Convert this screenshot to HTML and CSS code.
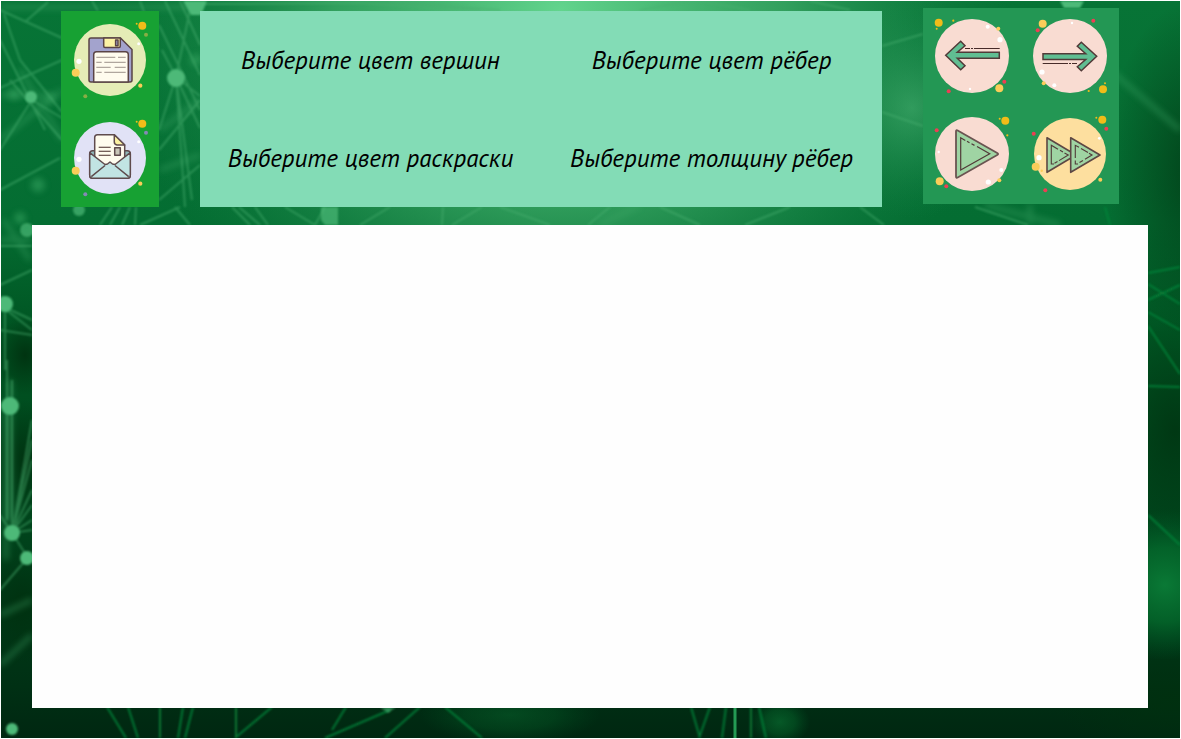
FILE: index.html
```html
<!DOCTYPE html>
<html lang="ru">
<head>
<meta charset="utf-8">
<meta name="viewport" content="width=device-width, initial-scale=1">
<title>Редактор графов</title>
<link rel="stylesheet" href="styles.css">
</head>
<body>
<div class="app">
  <svg class="backdrop" viewBox="1 1 1179 737" preserveAspectRatio="none" aria-hidden="true">
    <defs>
      <linearGradient id="base" x1="0" y1="0" x2="0" y2="1">
        <stop offset="0" stop-color="#077436"/><stop offset=".3" stop-color="#046d32"/><stop offset=".45" stop-color="#005422"/><stop offset=".7" stop-color="#00451c"/><stop offset=".93" stop-color="#003014"/><stop offset="1" stop-color="#002711"/>
      </linearGradient>
      <radialGradient id="light"><stop offset="0" stop-color="#62d48d"/><stop offset=".5" stop-color="#40ae6a" stop-opacity=".75"/><stop offset="1" stop-color="#168548" stop-opacity="0"/></radialGradient>
      <radialGradient id="soft"><stop offset="0" stop-color="#4cb576" stop-opacity=".8"/><stop offset="1" stop-color="#16874a" stop-opacity="0"/></radialGradient>
      <radialGradient id="glow"><stop offset="0" stop-color="#0b8039" stop-opacity=".9"/><stop offset=".5" stop-color="#05702f" stop-opacity=".7"/><stop offset="1" stop-color="#00602a" stop-opacity="0"/></radialGradient>
      <radialGradient id="dark"><stop offset="0" stop-color="#00300f" stop-opacity=".9"/><stop offset="1" stop-color="#00300f" stop-opacity="0"/></radialGradient>
      <filter id="blur1"><feGaussianBlur stdDeviation="1"/></filter>
      <filter id="blur3"><feGaussianBlur stdDeviation="3"/></filter>
    </defs>
    <rect x="1" y="1" width="1179" height="737" fill="url(#base)"/>
    <ellipse cx="560" cy="10" rx="450" ry="380" fill="url(#light)"/>
    <ellipse cx="912" cy="108" rx="100" ry="110" fill="url(#soft)" opacity=".7"/>
    <ellipse cx="1195" cy="170" rx="90" ry="170" fill="url(#dark)" opacity=".75"/>
    <ellipse cx="1175" cy="430" rx="70" ry="110" fill="url(#dark)" opacity=".8"/>
    <ellipse cx="1175" cy="700" rx="120" ry="60" fill="url(#dark)"/>
    <ellipse cx="1165" cy="585" rx="80" ry="75" fill="url(#glow)"/>
    <ellipse cx="25" cy="355" rx="30" ry="40" fill="url(#dark)"/>
    <ellipse cx="25" cy="460" rx="35" ry="60" fill="url(#dark)"/>
    <ellipse cx="22" cy="605" rx="40" ry="60" fill="url(#dark)"/>
    <ellipse cx="780" cy="722" rx="30" ry="24" fill="url(#glow)" opacity=".6"/>
    <ellipse cx="510" cy="715" rx="90" ry="30" fill="url(#glow)" opacity=".4"/>
    <g fill="none" stroke="#3fa869" stroke-width="5" opacity=".4" filter="url(#blur3)">
      <path d="M0 7H200M0 95H60M0 140 62 90M20 70 62 140M160 130 200 100M0 240H32M10 380V520M6 400V560M4 220 30 260M0 615 32 600M0 665 32 635M160 170 200 155M1110 70 1180 130M640 205 600 225M985 205 1060 225M1030 205V225"/>
    </g>
    <g fill="none" stroke="#48af70" stroke-width="2" opacity=".5" filter="url(#blur1)">
      <path d="M0 10 62 38M0 88 62 60M0 190 60 158M20 60 62 112M10 80 62 140M25 22 48 2M0 150 35 95M92 1 98 11M140 1 158 50M32 100 62 118M0 40 45 130M4 14 20 60"/>
      <path d="M159 25 200 110M165 1 200 75M180 1 200 45M176 77 159 130M176 77 185 207M176 77 192 200M176 77 200 128M176 77 200 96M176 77 162 50M176 77 190 10M159 150 200 100M159 200 200 165"/>
      <path d="M100 225 112 207M110 225 120 207M122 225 130 207M135 225 136 207M140 225 180 207M190 225 175 207M232 207 250 225M239 207 260 225M255 207 268 225M285 207 315 225M315 225 325 207M360 225 390 207M442 225 443 207M452 225 482 207M500 207 550 225M588 225 610 207M660 207 700 225M745 225 790 207M860 207 884 225M882 46 923 34M882 112 923 126M975 207 1028 225"/>
      <path d="M200 4 360 3 480 10M390 1 500 10M640 10 690 1M700 1 750 10M810 1 850 10"/>
      <path d="M0 246H32M0 285 32 270M0 305 32 320M0 305 32 330M0 330 32 335M5 310V370M12 533 32 420M12 533 32 440M12 533 32 460M12 533 32 490M12 533 32 505M12 533 32 520M12 533 32 530M12 533 28 558M12 533 0 515M12 533V380M7 360V520M30 555 0 590"/>
    </g>
    <g fill="none" stroke="#07833a" stroke-width="2" opacity=".85" filter="url(#blur1)">
      <path d="M107 707 126 738M128 707 138 738M160 707V738M183 707 178 738M193 707 185 738M236 707V738M272 707 235 738M390 710 325 738M420 707 385 738M346 707 332 730M445 707 482 738M691 707 700 738M710 707 699 738M726 707 722 738M751 707V738M759 707 766 738"/>
      <path d="M1148 273 1180 267M1148 284 1180 304M1148 300 1180 285M1148 312 1180 330M1148 326 1180 374M1148 386 1180 387M1148 515 1180 545M1105 207 1110 225"/>
    </g>
    <path d="M735 707V738" stroke="#249b54" stroke-width="3"/>
    <g fill="#4db978" filter="url(#blur1)">
      <circle cx="176" cy="78" r="9"/><path d="M183 1h24l-6 14h-10zM1060 1h24l-4 7h-16z"/><circle cx="31" cy="97" r="6"/>
      <circle cx="79" cy="210" r="6" opacity=".7"/><path d="M321 207h17v18h-13l-4-5z" opacity=".7"/><circle cx="27" cy="230" r="7" opacity=".7"/>
      <circle cx="5" cy="304" r="8"/><circle cx="10" cy="406" r="9"/><circle cx="12" cy="533" r="8"/><circle cx="27" cy="558" r="7"/><circle cx="12" cy="729" r="6"/><path d="M380 707h16l-8 6z" opacity=".6"/>
    </g>
    <g fill="#3cab67" opacity=".5" filter="url(#blur3)"><circle cx="38" cy="185" r="7"/><circle cx="14" cy="94" r="6"/><circle cx="50" cy="99" r="5"/><circle cx="20" cy="218" r="6"/><circle cx="196" cy="60" r="6"/></g>
  </svg>

  <header class="toolbar">
    <div class="file-panel">
      <button class="tool" type="button" aria-label="Сохранить">
        <svg viewBox="0 0 98 98" aria-hidden="true">
          <circle cx="49" cy="49" r="36" fill="#e5ecb6"/>
          <g fill="#f1bc19"><circle cx="81.3" cy="14.7" r="4"/><circle cx="75.7" cy="12.7" r="1"/></g>
          <g fill="#88ae45"><circle cx="85" cy="23.7" r="2"/><circle cx="24.3" cy="85.3" r="2"/></g>
          <g fill="#fff"><circle cx="77.7" cy="32.7" r="1.5"/><circle cx="18" cy="50.3" r="2.6"/></g>
          <g fill="#fbcd59"><circle cx="14.7" cy="61.7" r="4"/><circle cx="79.3" cy="74.7" r="2.1"/></g>
          <g stroke="#5a4446" stroke-width="1.5" stroke-linejoin="round">
            <path d="M30 27H59.5L71 38.5V69Q71 71 69 71H30Q28 71 28 69V29Q28 27 30 27Z" fill="#a3a3cd"/>
            <path d="M42.7 27H59.3V35Q59.3 36.5 58 36.5H44Q42.7 36.5 42.7 35Z" fill="#fdf3a4"/>
            <path d="M32.7 71V43.5Q32.7 40.7 35.5 40.7H64.5Q67.3 40.7 67.3 43.5V71Z" fill="#fffcee"/>
            <rect x="54.6" y="29" width="2.4" height="5.7" fill="#a3a3cd"/>
          </g>
          <path d="M35.3 46.3H54.3M57 46.3H64.7M35.3 51.3H40.7M43.3 51.3H64.7M35.3 56.3H49.7M53.7 56.3H64.7M35.3 61.3H40.7M43.3 61.3H64.7" stroke="#9d918a" stroke-width="1"/>
        </svg>
      </button>
      <button class="tool" type="button" aria-label="Открыть">
        <svg viewBox="0 0 98 98" aria-hidden="true">
          <circle cx="49" cy="49" r="36" fill="#e1e2f6"/>
          <g fill="#f1bc19"><circle cx="81.3" cy="14.7" r="4"/><circle cx="75.7" cy="12.7" r="1"/></g>
          <g fill="#8589b5"><circle cx="85" cy="23.7" r="2"/><circle cx="24.3" cy="85.3" r="2"/></g>
          <g fill="#fff"><circle cx="77.7" cy="32.7" r="1.5"/><circle cx="18" cy="50.3" r="2.6"/></g>
          <g fill="#fbcd59"><circle cx="14.7" cy="61.7" r="4"/><circle cx="79.3" cy="74.7" r="2.1"/></g>
          <g stroke="#5f4b4d" stroke-width="1.5" stroke-linejoin="round">
            <rect x="28.7" y="41.7" width="40.6" height="27.6" rx="3" fill="#8fb7ba"/>
            <path d="M33.7 60V28.5Q33.7 25.7 36.5 25.7H53.3L63.7 36V60Z" fill="#fffcee"/>
            <path d="M53.3 25.7V33Q53.3 35.5 56 36H63.7Z" fill="#fdf3a4"/>
            <path d="M28.7 43.7 44 55.5 46.5 55 49 53 51.5 55 54 55.5 69.3 43.7V66.5Q69.3 69.3 66.5 69.3H31.5Q28.7 69.3 28.7 66.5Z" fill="#c1e4e3"/>
            <path d="M30.3 67.7 44 56.5M67.7 67.7 54 56.5" fill="none"/>
            <rect x="53.7" y="38.7" width="5.6" height="7.6" fill="#c9c6b9"/>
          </g>
          <path d="M37.7 38.3H49.7M37.7 42.3H49.7M37.7 46.3H49.7" stroke="#472b29" stroke-width="1.1"/>
        </svg>
      </button>
    </div>

    <nav class="settings" aria-label="Настройки графа">
      <button class="setting" type="button">Выберите цвет вершин</button>
      <button class="setting" type="button">Выберите цвет рёбер</button>
      <button class="setting" type="button">Выберите цвет раскраски</button>
      <button class="setting" type="button">Выберите толщину рёбер</button>
    </nav>

    <div class="playback">
      <button class="tool" type="button" aria-label="Назад">
        <svg viewBox="0 0 98 98" aria-hidden="true">
          <circle cx="49" cy="48" r="37" fill="#f9dcd2"/>
          <g fill="#f1bc19"><circle cx="15.7" cy="14.7" r="4"/><circle cx="13.7" cy="20.7" r="1"/><circle cx="30.3" cy="12.7" r="1.1"/></g>
          <g fill="#fbcd59"><circle cx="75.3" cy="20.7" r="2"/><circle cx="76.3" cy="80.3" r="4"/></g>
          <g fill="#fff"><circle cx="64.7" cy="18.7" r="2"/><circle cx="77" cy="31.7" r="2.6"/><circle cx="47" cy="81" r="1.2"/></g>
          <g fill="#ee3e54"><circle cx="81.3" cy="73.7" r="2"/><circle cx="25.7" cy="83.3" r="2"/></g>
          <path d="M22.7 47.3 37.7 33.3 42 37.7 34.3 44.3H76.3V50.3H34.3L42 57.7 37.7 61.7Z" fill="#60be92" stroke="#513a38" stroke-width="1.5"/>
          <path d="M42 40.5H47M48 40.5H50M51 40.5H76.7" stroke="#472b29" stroke-width="1"/>
        </svg>
      </button>
      <button class="tool" type="button" aria-label="Вперёд">
        <svg viewBox="0 0 98 98" aria-hidden="true">
          <circle cx="49" cy="48" r="37" fill="#f9dcd2"/>
          <g fill="#f1bc19"><circle cx="82" cy="81.3" r="4"/><circle cx="84" cy="75.3" r="1"/><circle cx="67.7" cy="83" r="1.1"/></g>
          <g fill="#fbcd59"><circle cx="21.7" cy="15.7" r="4"/><circle cx="22.7" cy="75.3" r="2"/></g>
          <g fill="#fff"><circle cx="51" cy="15" r="1.2"/><circle cx="21" cy="64" r="2.6"/><circle cx="33.3" cy="77.3" r="2"/></g>
          <g fill="#ee3e54"><circle cx="16.7" cy="22.3" r="2"/><circle cx="72.3" cy="12.7" r="2"/></g>
          <path d="M22 45.7H64.7L56.3 38.3 60.3 34.3 75.7 48.3 60.3 62.7 56.3 58.7 64.7 51.5H22Z" fill="#60be92" stroke="#513a38" stroke-width="1.5"/>
          <path d="M21.7 55.5H47M48 55.5H50M51 55.5H56" stroke="#472b29" stroke-width="1"/>
        </svg>
      </button>
      <button class="tool" type="button" aria-label="Запустить">
        <svg viewBox="0 0 98 98" aria-hidden="true">
          <circle cx="49" cy="48" r="37" fill="#f9dcd2"/>
          <g fill="#f1bc19"><circle cx="82.3" cy="14.7" r="4"/><circle cx="76.7" cy="12.7" r="1"/><circle cx="84.3" cy="29.3" r="1.1"/></g>
          <g fill="#fbcd59"><circle cx="76.3" cy="74.3" r="2"/><circle cx="16.7" cy="75.3" r="4"/></g>
          <g fill="#fff"><circle cx="15.7" cy="46" r="1.2"/><circle cx="78.3" cy="64" r="2"/><circle cx="65.3" cy="76" r="2.6"/></g>
          <g fill="#ee3e54"><circle cx="13.7" cy="24.3" r="2"/><circle cx="23.3" cy="80.3" r="2"/></g>
          <path d="M33 25.5Q33 23.7 34.7 24.5L74.2 47Q76 48 74.2 49L34.7 71.5Q33 72.3 33 70.5Z" fill="#9fd4a3" stroke="#6a5451" stroke-width="1.8"/>
          <path d="M42.3 34.4 37.7 31.7V64L66.7 47.7 54 40.6M44 35.3 46.5 36.7M48.5 37.8 51.5 39.4" fill="none" stroke="#513a38" stroke-width="1.2"/>
        </svg>
      </button>
      <button class="tool" type="button" aria-label="Ускорить">
        <svg viewBox="0 0 98 98" aria-hidden="true">
          <circle cx="49" cy="48" r="36" fill="#fddf9f"/>
          <g fill="#f1bc19"><circle cx="81.3" cy="13.7" r="4"/><circle cx="75.3" cy="11.7" r="1"/></g>
          <g fill="#fbcd59"><circle cx="14.7" cy="60.7" r="4"/><circle cx="20.7" cy="64.7" r="1.2"/><circle cx="79.3" cy="73.7" r="2"/></g>
          <g fill="#fff"><circle cx="78.3" cy="32.3" r="1.4"/><circle cx="18" cy="51.7" r="2.6"/></g>
          <g fill="#ee3e54"><circle cx="85.3" cy="22.7" r="2"/><circle cx="12.7" cy="27.7" r="2"/><circle cx="24.3" cy="84.3" r="2"/></g>
          <g fill="#9fd4a3" stroke="#5d4744" stroke-width="1.6" stroke-linejoin="round">
            <path d="M26 31.7 55 49 26 66.3Z"/><path d="M49.7 31.7 79 49 49.7 66.3Z"/>
          </g>
          <g fill="none" stroke="#513a38" stroke-width="1.1">
            <path d="M33 58H30.3V39.3L37 43.2M39 44.3 42 46M43.5 47 47.3 49 38 54.6M36.5 55.5 33.5 57.2"/>
            <path d="M54.3 52V39.3L58 41.3M60 42.5 67 46.5M68 47.3 71 49 64 53.3M62 54.5 58.5 56.5M54.3 54.5V58H57"/>
          </g>
        </svg>
      </button>
    </div>
  </header>

  <main class="board" aria-label="Поле графа"></main>
</div>
</body>
</html>
```
FILE: styles.css
```css
* {
  box-sizing: border-box;
}

body {
  margin: 0;
  padding: 1px;
  background: #fff;
  font-family: "PT Sans", "Noto Sans", "Open Sans", sans-serif;
}

.app {
  position: relative;
  isolation: isolate;
  display: flex;
  flex-direction: column;
  gap: 18px;
  min-height: calc(100vh - 2px);
  padding: 7px 32px 30px 31px;
}

.backdrop {
  position: absolute;
  inset: 0;
  z-index: -1;
  width: 100%;
  height: 100%;
}

.toolbar {
  display: flex;
  align-items: flex-end;
  gap: 41px;
  padding: 0 29px;
}

.file-panel {
  display: grid;
  flex: none;
  background: #17a133;
}

.settings {
  display: grid;
  flex: 1;
  grid-template-columns: 1fr 1fr;
  grid-auto-rows: 98px;
  background: #83dcb6;
}

.playback {
  display: grid;
  flex: none;
  align-self: flex-start;
  grid-template-columns: auto auto;
  margin-bottom: 3px;
  background: #239754;
}

.tool {
  display: block;
  width: 98px;
  height: 98px;
  padding: 0;
  border: 0;
  background: none;
  cursor: pointer;
}

.tool svg {
  display: block;
  width: 100%;
  height: 100%;
}

.setting {
  padding: 0;
  border: 0;
  background: none;
  color: #000;
  font-family: inherit;
  font-size: 25px;
  font-style: italic;
  line-height: 32px;
  cursor: pointer;
}

.board {
  flex: 1;
  background: #fefefe;
}
```
